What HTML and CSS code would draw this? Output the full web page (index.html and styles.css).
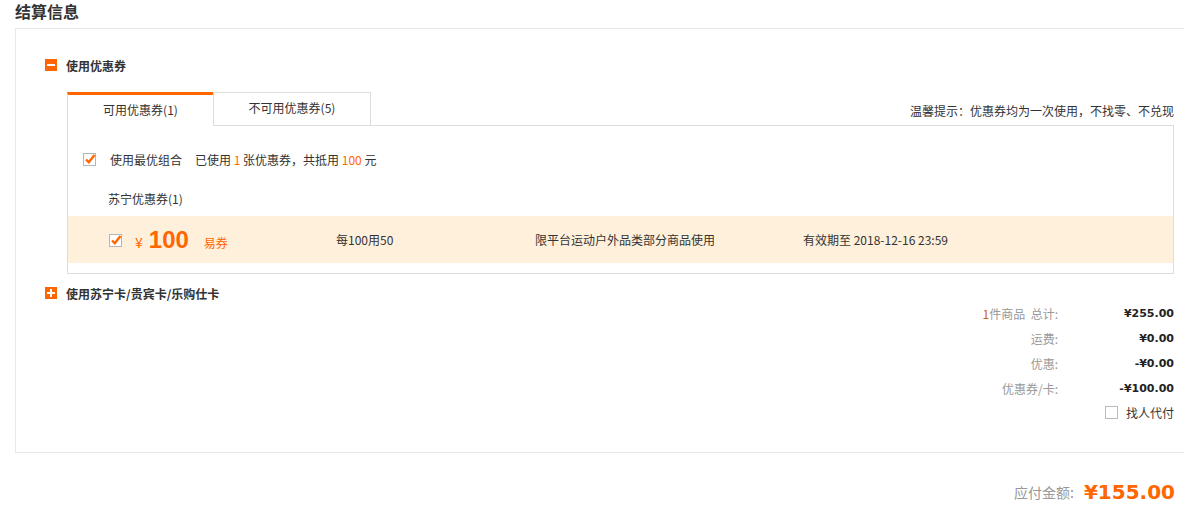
FILE: index.html
```html
<!DOCTYPE html>
<html lang="zh-CN">
<head>
  <meta charset="UTF-8">
  <title>结算信息</title>
  <link rel="stylesheet" href="styles.css">
</head>
<body>

  <div class="page">
    <h2 class="page-title">结算信息</h2>

    <div class="settle-box">
      <div class="section-head">
        <svg class="toggle" width="12" height="12" viewBox="0 0 12 12"><rect width="12" height="12" fill="#f60"/><rect x="2" y="5" width="8" height="2" fill="#fff"/></svg>
        <span>使用优惠券</span>
      </div>

      <div class="coupon-area">
        <div class="tabs">
          <div class="tab active">可用优惠券(1)</div>
          <div class="tab">不可用优惠券(5)</div>
          <div class="tip">温馨提示：优惠券均为一次使用，不找零、不兑现</div>
        </div>

        <div class="coupon-box">
          <div class="best-row">
            <svg class="check" width="14" height="14" viewBox="0 0 14 14"><rect x="0.5" y="1.5" width="12" height="12" fill="#fff" stroke="#b5b5b5"/><path d="M3 7.5 L5.8 10.2 L11.5 3" fill="none" stroke="#f60" stroke-width="2.4"/></svg>
            <span class="best-label">使用最优组合</span>
            <span>已使用 <em>1</em> 张优惠券，共抵用 <em>100</em> 元</span>
          </div>

          <div class="group-title">苏宁优惠券(1)</div>

          <div class="coupon-row">
            <div class="c-check">
              <svg class="check" width="14" height="14" viewBox="0 0 14 14"><rect x="0.5" y="1.5" width="12" height="12" fill="#fff" stroke="#b5b5b5"/><path d="M3 7.5 L5.8 10.2 L11.5 3" fill="none" stroke="#f60" stroke-width="2.4"/></svg>
            </div>
            <div class="c-amount">
              <span class="yen">¥</span><span class="num">100</span><span class="kind">易券</span>
            </div>
            <div class="c-rule">每100用50</div>
            <div class="c-scope">限平台运动户外品类部分商品使用</div>
            <div class="c-date">有效期至 2018-12-16 23:59</div>
          </div>
        </div>
      </div>

      <div class="section-head card-head">
        <svg class="toggle" width="12" height="12" viewBox="0 0 12 12"><rect width="12" height="12" fill="#f60"/><rect x="2" y="5" width="8" height="2" fill="#fff"/><rect x="5" y="2" width="2" height="8" fill="#fff"/></svg>
        <span>使用苏宁卡/贵宾卡/乐购仕卡</span>
      </div>

      <div class="totals">
        <div class="total-row">
          <span class="t-label"><i>1</i>件商品&nbsp; 总计:</span>
          <span class="t-value">¥255.00</span>
        </div>
        <div class="total-row">
          <span class="t-label">运费:</span>
          <span class="t-value">¥0.00</span>
        </div>
        <div class="total-row">
          <span class="t-label">优惠:</span>
          <span class="t-value">-¥0.00</span>
        </div>
        <div class="total-row">
          <span class="t-label">优惠券/卡:</span>
          <span class="t-value">-¥100.00</span>
        </div>
        <div class="proxy-row">
          <span class="box"></span>
          <span>找人代付</span>
        </div>
      </div>
    </div>

    <div class="pay-row">
      <span class="pay-label">应付金额:</span>
      <span class="pay-value">¥155.00</span>
    </div>
  </div>

</body>
</html>
```

FILE: styles.css
```css
html, body {
  overflow: hidden;
}

body {
  margin: 0;
  font-family: "Noto Sans CJK SC", "Noto Sans", sans-serif;
  font-size: 12px;
  color: #333;
  background: #fff;
}

.page {
  width: 1196px;
  padding-left: 15px;
}

.page-title {
  margin: 0 0 6px;
  font-size: 16px;
  line-height: 22px;
  font-weight: bold;
  color: #333;
}

.settle-box {
  box-sizing: border-box;
  width: 1196px;
  border: 1px solid #e8e8e8;
  padding: 26px 36px 29px 29px;
}

.section-head {
  display: flex;
  align-items: center;
  height: 20px;
  font-weight: bold;
}

.section-head .toggle {
  margin-right: 9px;
}

.coupon-area {
  margin: 17px 0 0 22px;
}

.tabs {
  display: flex;
  position: relative;
  margin-bottom: -1px;
}

.tab {
  box-sizing: border-box;
  height: 34px;
  text-align: center;
  line-height: 30px;
  border: 1px solid #ddd;
  background: #fff;
  width: 158px;
}

.tab.active {
  width: 146px;
  border: none;
  border-left: 1px solid #ddd;
  border-top: 3px solid #f60;
  line-height: 29px;
  position: relative;
  z-index: 1;
}

.tip {
  margin-left: auto;
  padding-top: 7px;
  line-height: 24px;
}

.coupon-box {
  border: 1px solid #ddd;
  padding-bottom: 10px;
}

.best-row {
  display: flex;
  align-items: center;
  height: 20px;
  padding: 23px 0 0 15px;
}

.best-row .check {
  margin-right: 13px;
}

.best-label {
  margin-right: 13px;
}

em {
  font-style: normal;
  color: #f60;
}

.group-title {
  line-height: 20px;
  padding-left: 40px;
  margin-top: 20px;
}

.coupon-row {
  display: flex;
  align-items: center;
  height: 47px;
  margin-top: 7px;
  padding-left: 41px;
  background: #fff0db;
}

.c-check {
  width: 26px;
  display: flex;
}

.c-amount {
  width: 201px;
  color: #f60;
  display: flex;
  align-items: baseline;
}

.c-amount .yen {
  font-size: 14px;
  margin-right: 6px;
}

.c-amount .num {
  font-family: "Liberation Sans", Arial, sans-serif;
  font-size: 24px;
  font-weight: bold;
  margin-right: 15px;
}

.c-amount .kind {
  font-size: 12px;
}

.c-rule {
  width: 199px;
}

.c-scope {
  width: 268px;
}

.card-head {
  height: 16px;
  margin-top: 11px;
}

.totals {
  display: flex;
  flex-direction: column;
  align-items: flex-end;
}

.total-row {
  display: flex;
  line-height: 25px;
}

.t-label {
  width: 160px;
  text-align: right;
  color: #999;
}

.t-label i {
  font-style: normal;
  color: #c60;
}

.t-value {
  width: 116px;
  text-align: right;
  font-family: "DejaVu Sans", Verdana, sans-serif;
  font-size: 11px;
  font-weight: bold;
  color: #222;
}

.proxy-row {
  display: flex;
  align-items: center;
  height: 22px;
}

.proxy-row .box {
  width: 11px;
  height: 11px;
  border: 1px solid #bbb;
  margin-right: 8px;
}

.pay-row {
  display: flex;
  justify-content: flex-end;
  align-items: center;
  height: 30px;
  margin-top: 24px;
  padding-right: 36px;
}

.pay-label {
  font-size: 14px;
  color: #999;
  margin-right: 10px;
}

.pay-value {
  font-family: "DejaVu Sans", Verdana, sans-serif;
  font-size: 20px;
  font-weight: bold;
  color: #f60;
}
```
